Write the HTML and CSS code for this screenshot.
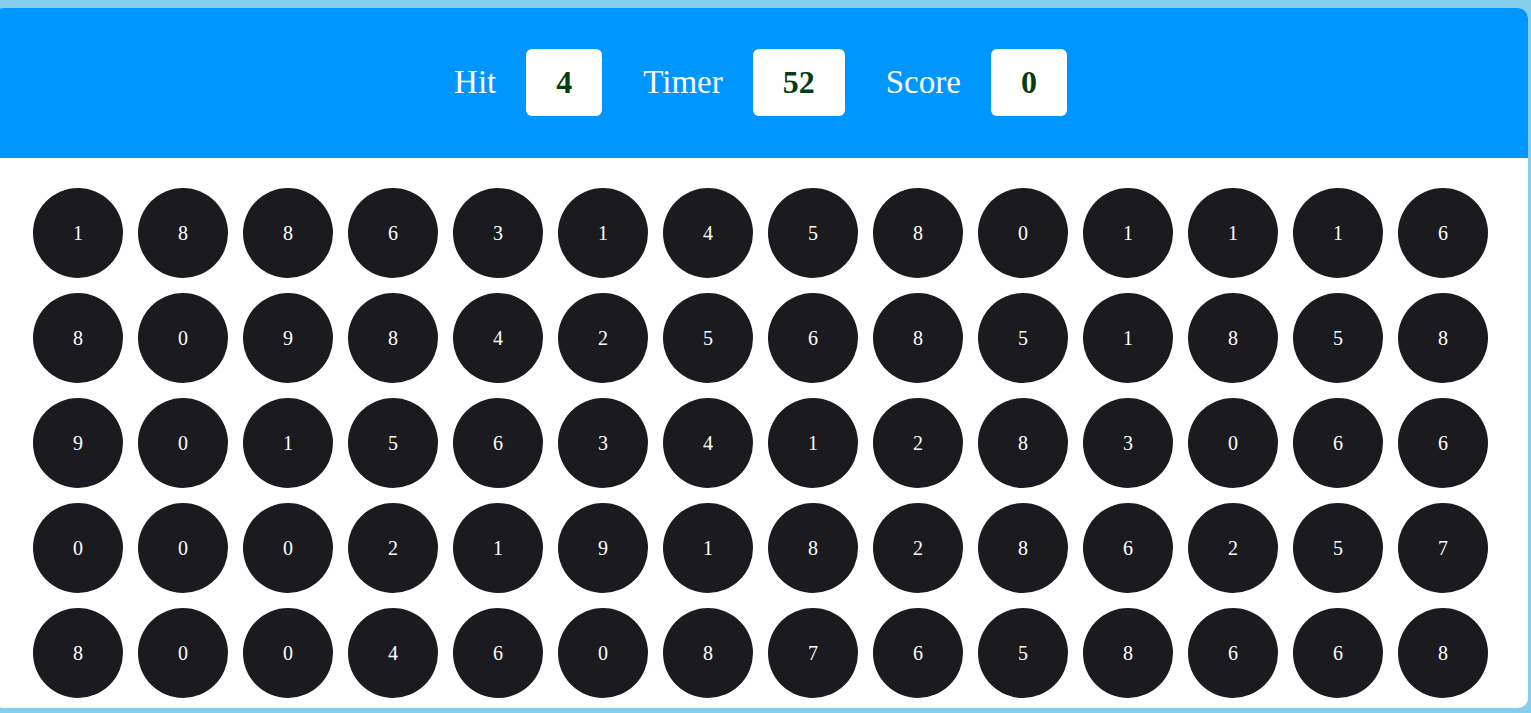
FILE: index.html
```html
<!DOCTYPE html>
<html>
<head>
<meta charset="utf-8">
<link rel="stylesheet" href="styles.css">
</head>
<body>
<div class="panel">
  <div class="header">
    <div class="stat"><span class="label">Hit</span><span class="box">4</span></div>
    <div class="stat"><span class="label">Timer</span><span class="box">52</span></div>
    <div class="stat"><span class="label">Score</span><span class="box">0</span></div>
  </div>
  <div class="board" id="board"></div>
</div>
<script>
var nums = "1886314580111680984256851858901563412830660002191828625780046087658668";
var b = document.getElementById('board');
for (var i = 0; i < nums.length; i++) {
  var d = document.createElement('div');
  d.className = 'bubble';
  d.textContent = nums[i];
  b.appendChild(d);
}
</script>
</body>
</html>
```
FILE: styles.css
```css
html, body {
  margin: 0;
  padding: 0;
}
body {
  background: #87ceeb;
  font-family: "Liberation Serif", "Times New Roman", serif;
  padding-top: 8px;
  overflow: hidden;
  height: 713px;
  box-sizing: border-box;
}
.panel {
  margin-left: -7px;
  width: 1535px;
  height: 700px;
  background: #fff;
  border-radius: 10px;
  overflow: hidden;
}
.header {
  height: 150px;
  box-sizing: border-box;
  padding-bottom: 2px;
  background: #0096ff;
  display: flex;
  align-items: center;
  justify-content: center;
  gap: 41px;
}
.stat {
  display: flex;
  align-items: center;
  gap: 30px;
}
.label {
  color: #fff;
  font-size: 33px;
}
.box {
  background: #fff;
  color: #053c14;
  font-weight: bold;
  font-size: 32px;
  line-height: 37px;
  padding: 15px 30px;
  border-radius: 6px;
}
.board {
  display: flex;
  flex-wrap: wrap;
  justify-content: center;
  gap: 15px;
  padding: 30px 0 0 0;
}
.bubble {
  width: 90px;
  height: 90px;
  border-radius: 50%;
  background: #1b1a1f;
  color: #fff;
  font-size: 20px;
  display: flex;
  align-items: center;
  justify-content: center;
}
```
